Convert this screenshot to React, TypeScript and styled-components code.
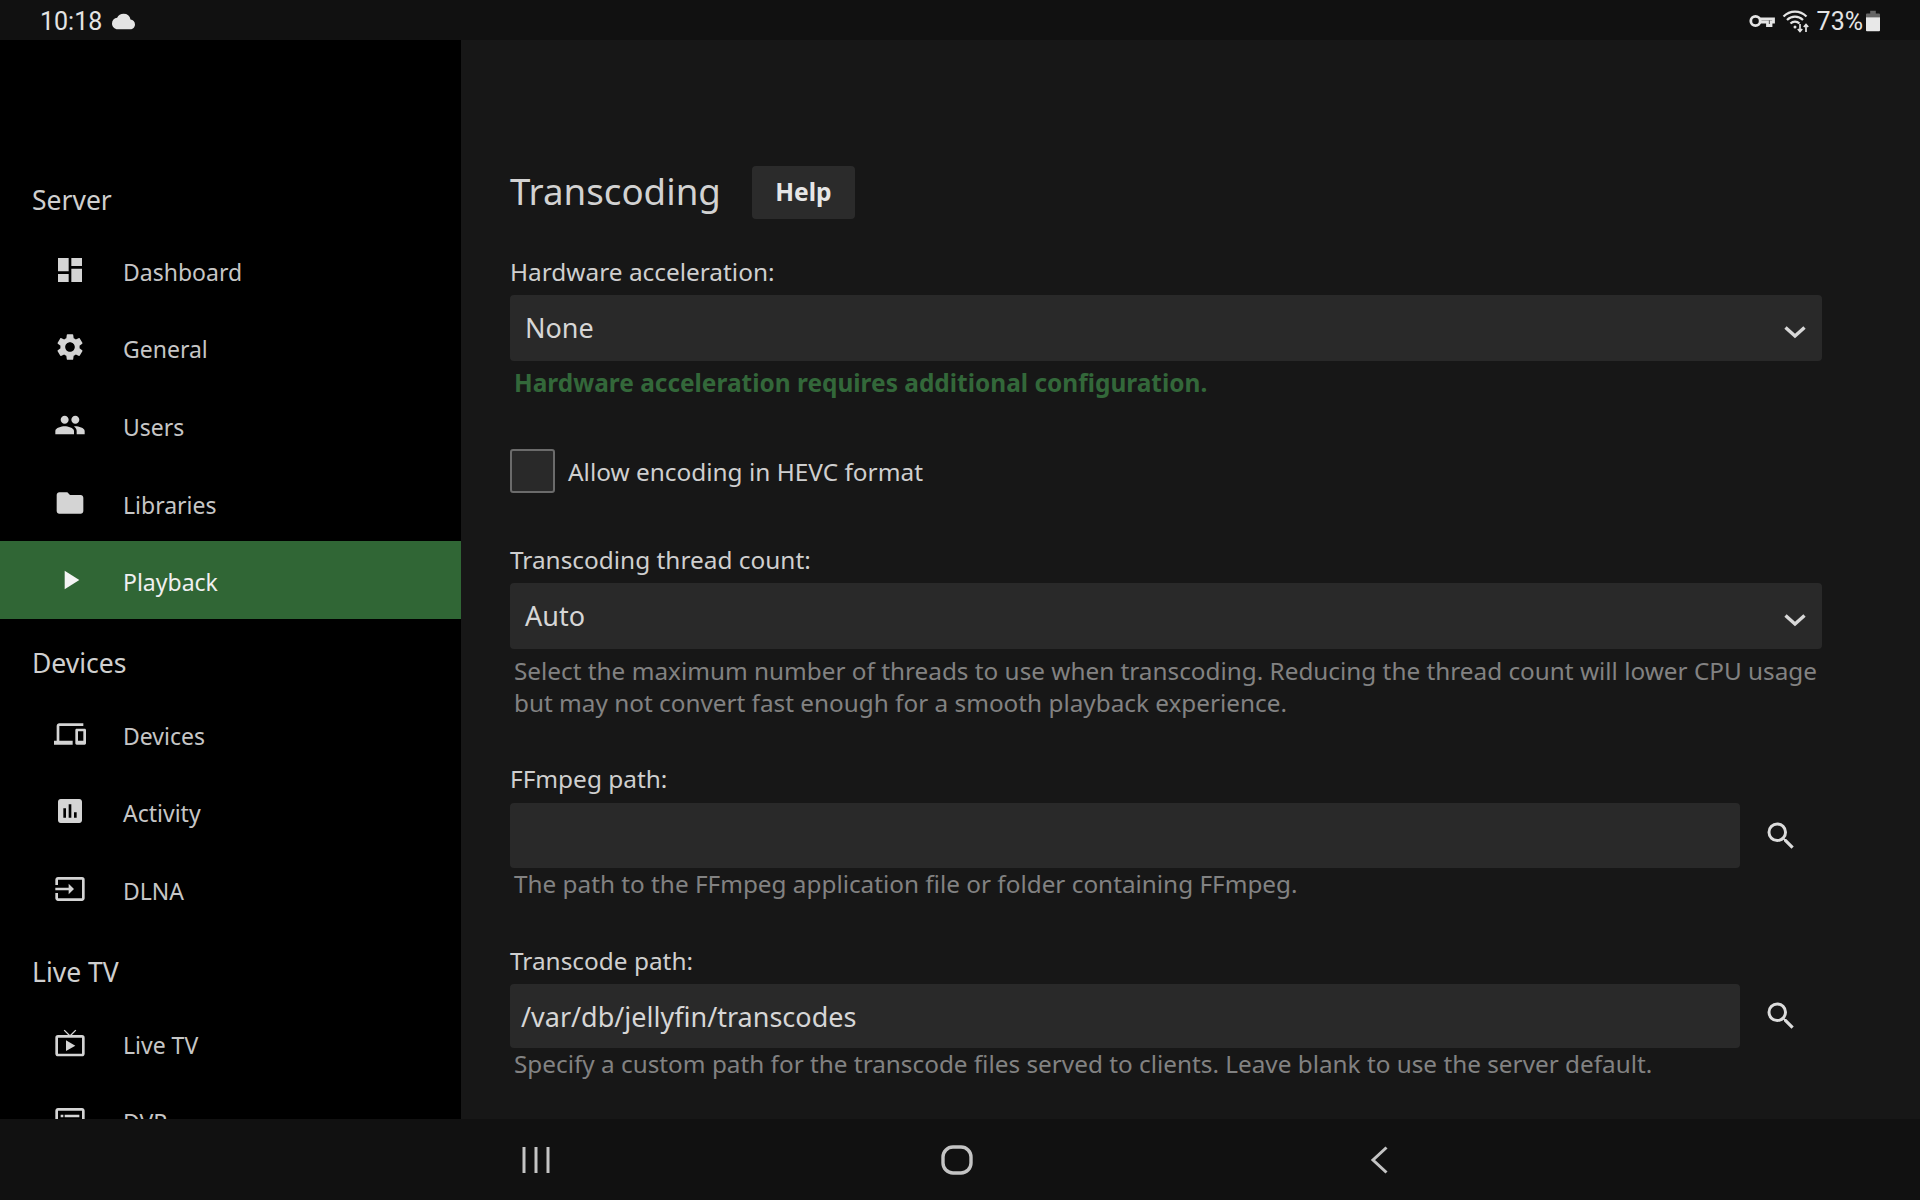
import React from "react";
import styled, { createGlobalStyle } from "styled-components";
import {
  MdDashboard, MdSettings, MdPeople, MdFolder, MdPlayArrow, MdDevices, MdAssessment,
  MdInput, MdLiveTv, MdDvr, MdSearch, MdCloud,
} from "react-icons/md";

const Global = createGlobalStyle`
  html, body { margin: 0; padding: 0; background: #111; }
  * { box-sizing: border-box; }
`;

const Screen = styled.div`
  width: 1920px; height: 1200px; display: flex; flex-direction: column; overflow: hidden;
  font-family: "Noto Sans", sans-serif; background: #171717;
`;
const StatusBar = styled.div`
  height: 40px; flex: none; background: #111; color: #e4e4e4; display: flex; align-items: center;
  justify-content: space-between; padding: 2px 40px 0 40px; font-family: Roboto, sans-serif; font-size: 25px;
`;
const StatusGroup = styled.div`display: flex; align-items: center; gap: ${(p: { $gap: number }) => p.$gap}px;`;
const Body = styled.div`flex: 1; min-height: 0; display: flex;`;
const Sidebar = styled.nav`
  width: 461px; flex: none; background: #000; padding-top: 119px; overflow: hidden;
`;
const SectionTitle = styled.div`
  height: 72px; padding: 9px 0 0 32px; display: flex; align-items: center; color: #cfcfcf; font-size: 26.5px;
`;
const NavGroup = styled.div`margin-bottom: 4px;`;
const NavRow = styled.div<{ $active?: boolean }>`
  height: 77.6px; display: flex; align-items: center; padding-left: 52px;
  background: ${(p) => (p.$active ? "#306635" : "transparent")};
  color: ${(p) => (p.$active ? "#f0f0f0" : "#c6c6c6")};
  font-size: 23px;
`;
const NavIcon = styled.span<{ $active?: boolean }>`
  width: 36px; height: 36px; flex: none; margin-right: 35px; font-size: 32px; display: flex; align-items: center;
  justify-content: center; color: ${(p) => (p.$active ? "#f4f4f4" : "#d4d4d4")};
`;
const NavLabel = styled.span`transform: translateY(2px);`;
const Main = styled.main`
  flex: 1; min-width: 0; padding: 126px 98px 0 49px; overflow: hidden; background: #171717;
`;
const TitleRow = styled.div`display: flex; align-items: center; height: 53px; margin-bottom: 37px;`;
const Title = styled.h1`
  margin: -2px 31px 0 0; font-size: 36.7px; font-weight: 400; color: #d2d2d2; line-height: 53px;
`;
const HelpButton = styled.button`
  width: 103px; height: 53px; border: 0; padding: 0 0 2px; border-radius: 4px; background: #2b2b2b; color: #e6e6e6;
  font: 700 24.6px "Noto Sans", sans-serif;
`;
const FieldLabel = styled.label<{ $gap?: number }>`
  display: block; color: #cfcfcf; font-size: 24.4px; line-height: 32px; margin-bottom: ${(p) => p.$gap ?? 7}px;
`;
const Select = styled.div`
  height: 66px; background: #292929; border-radius: 4px; display: flex; align-items: center;
  justify-content: space-between; padding: 0 16px 2px 15px; color: #d6d6d6; font-size: 27px;
`;
const Chevron = styled.svg`width: 22px; height: 14px; margin-top: 9px; display: block;`;
const Note = styled.div<{ $green?: boolean }>`
  margin-top: 6px; padding-left: 4px; font-size: ${(p) => (p.$green ? 24.45 : 24.32)}px; line-height: 32px;
  color: ${(p) => (p.$green ? "#33683a" : "#828282")}; font-weight: ${(p) => (p.$green ? 700 : 400)};
`;
const PathNote = styled(Note)`margin-top: 0;`;
const CheckRow = styled.div`
  display: flex; align-items: center; height: 44px; margin: 50px 0 51px; color: #cfcfcf; font-size: 24.4px;
`;
const CheckBox = styled.span`
  width: 45px; height: 44px; border: 2px solid #6b6b6b; border-radius: 3px; background: #292929; margin-right: 13px;
`;
const PathField = styled.div`margin-top: ${(p: { $top: number }) => p.$top}px;`;
const PathRow = styled.div`display: flex; align-items: center;`;
const PathInput = styled.div`
  width: 1230px; height: ${(p: { $h: number }) => p.$h}px; background: #292929; border-radius: 4px; display: flex;
  align-items: center; padding-left: 11px; color: #d6d6d6; font-size: 27px;
`;
const SearchIcon = styled.span`
  width: 36px; height: 36px; margin-left: 23px; font-size: 44px; color: #dcdcdc; display: flex; align-items: center; justify-content: center;
`;
const NavBar = styled.div`
  height: 81px; flex: none; background: #111; display: grid; grid-template-columns: 550px 423px 415px; padding-top: 1px;
  align-items: center; color: #c4c4c4;
`;
const NavKey = styled.div`display: flex; justify-content: flex-end;`;

const sections = [
  { title: "Server", items: [
    ["Dashboard", <MdDashboard key="a" />], ["General", <MdSettings key="a" />], ["Users", <MdPeople key="a" />],
    ["Libraries", <MdFolder key="a" />], ["Playback", <MdPlayArrow key="a" />, true],
  ] },
  { title: "Devices", items: [
    ["Devices", <MdDevices key="a" />], ["Activity", <MdAssessment key="a" />], ["DLNA", <MdInput key="a" />],
  ] },
  { title: "Live TV", items: [
    ["Live TV", <MdLiveTv key="a" />], ["DVR", <MdDvr key="a" />],
  ] },
] as const;

const Down = () => (
  <Chevron viewBox="0 0 22 14"><path d="M1.500 2.500 11 11l9.500-8.500" fill="none" stroke="#d8d8d8" strokeWidth="3.400" /></Chevron>
);

export default function App() {
  return (
    <Screen>
      <Global />
      <StatusBar>
        <StatusGroup $gap={10}>
          <span>10:18</span>
          <MdCloud size={23} />
        </StatusGroup>
        <StatusGroup $gap={7}>
          <svg width="26" height="14" viewBox="0 0 26 14" fill="none" stroke="#e4e4e4" strokeWidth="2.800">
            <circle cx="6.500" cy="7" r="4.700" />
            <path d="M11 4.800h13.500v3.200h-2.500v3.500h-3.500V8H11" />
          </svg>
          <svg width="28" height="24" viewBox="0 0 28 24" fill="none" stroke="#e4e4e4" strokeWidth="2.200">
            <path d="M1.500 7.500C8 1 18 1 24.500 7.500M5 11c4.500-4.500 11.500-4.500 16 0M8.500 14.500c2.500-2.500 6.500-2.500 9 0" />
            <circle cx="13" cy="18" r="1.500" fill="#e4e4e4" stroke="none" />
            <path d="M18 15v7M15.800 20l2.200 2.500 2.200-2.500M24 23v-7M21.800 18l2.200-2.500 2.200 2.500" strokeWidth="1.700" />
          </svg>
          <StatusGroup $gap={3}>
            <span>73%</span>
            <svg width="14" height="22" viewBox="0 0 15 22">
              <path d="M4.500 0h6v3H14a1 1 0 0 1 1 1v3H0V4a1 1 0 0 1 1-1h3.500z" fill="#666" />
              <path d="M0 7h15v14a1 1 0 0 1-1 1H1a1 1 0 0 1-1-1z" fill="#e8e8e8" />
            </svg>
          </StatusGroup>
        </StatusGroup>
      </StatusBar>
      <Body>
        <Sidebar>
          {sections.map((s) => (
            <React.Fragment key={s.title}>
              <SectionTitle>{s.title}</SectionTitle>
              <NavGroup>
                {s.items.map((it) => (
                  <NavRow key={it[0] as string} $active={!!it[2]}>
                    <NavIcon $active={!!it[2]}>{it[1]}</NavIcon>
                    <NavLabel>{it[0]}</NavLabel>
                  </NavRow>
                ))}
              </NavGroup>
            </React.Fragment>
          ))}
        </Sidebar>
        <Main>
          <TitleRow>
            <Title>Transcoding</Title>
            <HelpButton>Help</HelpButton>
          </TitleRow>
          <FieldLabel>Hardware acceleration:</FieldLabel>
          <Select>None<Down /></Select>
          <Note $green>Hardware acceleration requires additional configuration.</Note>
          <CheckRow><CheckBox />Allow encoding in HEVC format</CheckRow>
          <FieldLabel>Transcoding thread count:</FieldLabel>
          <Select>Auto<Down /></Select>
          <Note>
            Select the maximum number of threads to use when transcoding. Reducing the thread count will lower CPU usage
            <br />but may not convert fast enough for a smooth playback experience.
          </Note>
          <PathField $top={44}>
            <FieldLabel $gap={8}>FFmpeg path:</FieldLabel>
            <PathRow>
              <PathInput $h={65} />
              <SearchIcon><MdSearch /></SearchIcon>
            </PathRow>
            <PathNote>The path to the FFmpeg application file or folder containing FFmpeg.</PathNote>
          </PathField>
          <PathField $top={45}>
            <FieldLabel>Transcode path:</FieldLabel>
            <PathRow>
              <PathInput $h={64}>/var/db/jellyfin/transcodes</PathInput>
              <SearchIcon><MdSearch /></SearchIcon>
            </PathRow>
            <PathNote>Specify a custom path for the transcode files served to clients. Leave blank to use the server default.</PathNote>
          </PathField>
        </Main>
      </Body>
      <NavBar>
        <NavKey>
          <svg width="28" height="28" viewBox="0 0 28 28" stroke="#c4c4c4" strokeWidth="3" fill="none">
            <path d="M2 1v26M14 1v26M26 1v26" />
          </svg>
        </NavKey>
        <NavKey>
          <svg width="32" height="30" viewBox="0 0 32 30" fill="none" stroke="#c4c4c4" strokeWidth="3.400">
            <rect x="2" y="2" width="28" height="26" rx="10" />
          </svg>
        </NavKey>
        <NavKey>
          <svg width="20" height="28" viewBox="0 0 20 28" fill="none" stroke="#c4c4c4" strokeWidth="3">
            <path d="M18.500 1.500 5 14l13.500 12.500" />
          </svg>
        </NavKey>
      </NavBar>
    </Screen>
  );
}
